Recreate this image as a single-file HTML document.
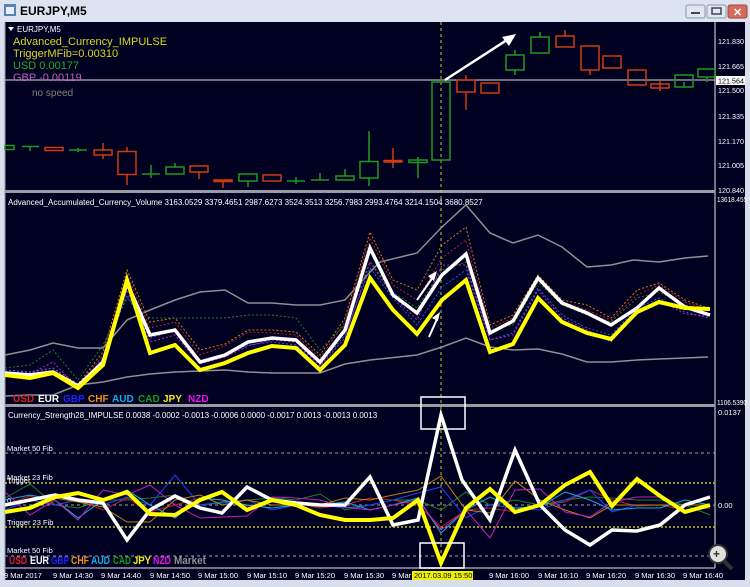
<!DOCTYPE html>
<html><head><meta charset="utf-8"><style>
html,body{margin:0;padding:0;background:#d4dde9;width:750px;height:587px;overflow:hidden}
svg{display:block}
text{font-family:"Liberation Sans",sans-serif}
</style></head><body>
<svg width="750" height="587" viewBox="0 0 750 587" xmlns="http://www.w3.org/2000/svg">
<rect x="0" y="0" width="750" height="587" fill="#d6dfeb"/>
<rect x="0" y="0" width="750" height="22" fill="#dbe4f0"/>
<rect x="4" y="4" width="12" height="12" fill="#5a80b8"/><rect x="6" y="7" width="8" height="7" fill="#e8f0fa"/>
<text x="20" y="15" font-size="12" font-weight="bold" fill="#000">EURJPY,M5</text>
<rect x="686" y="5" width="19" height="13" rx="2" fill="#dfe7f2" stroke="#8a9ab0"/><rect x="691" y="12" width="9" height="2" fill="#445"/>
<rect x="707" y="5" width="19" height="13" rx="2" fill="#dfe7f2" stroke="#8a9ab0"/><rect x="712" y="8" width="9" height="6" fill="none" stroke="#445" stroke-width="1.5"/>
<rect x="728" y="5" width="19" height="13" rx="2" fill="#d86a5a" stroke="#9a4a40"/><text x="733" y="16" font-size="11" font-weight="bold" fill="#fff">✕</text>
<rect x="5" y="22" width="740" height="558" fill="#000020"/>
<rect x="5" y="190" width="710" height="3" fill="#9a9aa4"/>
<rect x="5" y="404" width="710" height="3" fill="#9a9aa4"/>
<line x1="715" y1="22" x2="715" y2="568" stroke="#9a9aa4" stroke-width="1.5"/>
<line x1="5" y1="568" x2="715" y2="568" stroke="#9a9aa4" stroke-width="1.5"/>
<line x1="5" y1="22" x2="5" y2="580" stroke="#9a9aa4"/>
<line x1="5" y1="80" x2="715" y2="80" stroke="#b0b0b8" stroke-width="1.2"/>
<line x1="441" y1="22" x2="441" y2="568" stroke="#c8c820" stroke-dasharray="3,3"/>
<g stroke-width="1.5" fill="none">
<g stroke="#1e9a1e">
<rect x="5" y="145.5" width="9" height="4"/><line x1="22" y1="146.5" x2="39" y2="146.5"/><line x1="30" y1="146" x2="30" y2="151"/>
<line x1="69" y1="150" x2="87" y2="150"/><line x1="78" y1="148" x2="78" y2="152"/>
<line x1="142" y1="174" x2="160" y2="174"/><line x1="151" y1="165" x2="151" y2="178"/>
<rect x="166" y="167" width="18" height="7"/><line x1="175" y1="163" x2="175" y2="167"/>
<rect x="239" y="174" width="18" height="7"/><line x1="248" y1="181" x2="248" y2="187"/>
<line x1="287" y1="181" x2="305" y2="181"/><line x1="296" y1="177" x2="296" y2="184"/>
<line x1="311" y1="180" x2="329" y2="180"/><line x1="320" y1="173" x2="320" y2="180"/>
<rect x="336" y="176" width="18" height="4"/><line x1="345" y1="169" x2="345" y2="176"/>
<rect x="360" y="161.5" width="18" height="16.5"/><line x1="369" y1="131" x2="369" y2="161.5"/><line x1="369" y1="178" x2="369" y2="186"/>
<rect x="409" y="160" width="18" height="2.5"/><line x1="418" y1="157" x2="418" y2="178"/>
<rect x="432" y="82" width="18" height="78"/>
<rect x="506" y="55" width="18" height="15"/><line x1="515" y1="50" x2="515" y2="55"/><line x1="515" y1="70" x2="515" y2="75"/>
<rect x="531" y="37" width="18" height="16"/><line x1="540" y1="32" x2="540" y2="37"/>
<rect x="675" y="75" width="18" height="12"/><line x1="684" y1="87" x2="684" y2="82"/>
<rect x="698" y="69" width="17" height="8"/><line x1="707" y1="77" x2="707" y2="82"/>
</g>
<g stroke="#d03a10">
<rect x="45" y="147.5" width="18" height="3"/>
<rect x="94" y="150" width="18" height="5"/><line x1="103" y1="143" x2="103" y2="150"/><line x1="103" y1="155" x2="103" y2="159"/>
<rect x="118" y="151.5" width="18" height="23"/><line x1="127" y1="147" x2="127" y2="151.5"/><line x1="127" y1="174.5" x2="127" y2="185"/>
<rect x="190" y="166" width="18" height="6"/><line x1="199" y1="172" x2="199" y2="179"/>
<rect x="214" y="180" width="18" height="1.5"/><line x1="223" y1="181" x2="223" y2="188"/>
<rect x="263" y="175" width="18" height="6"/>
<rect x="384" y="160.5" width="18" height="1.5"/><line x1="393" y1="148" x2="393" y2="168"/>
<rect x="457" y="80" width="18" height="12"/><line x1="466" y1="75" x2="466" y2="80"/><line x1="466" y1="92" x2="466" y2="110"/>
<rect x="481" y="83" width="18" height="10"/>
<rect x="556" y="36" width="18" height="11"/><line x1="565" y1="30" x2="565" y2="36"/>
<rect x="581" y="46" width="18" height="24"/><line x1="590" y1="70" x2="590" y2="75"/>
<rect x="603" y="56" width="18" height="12"/>
<rect x="628" y="70" width="18" height="15"/>
<rect x="651" y="84" width="18" height="4"/><line x1="660" y1="80" x2="660" y2="91"/>
</g>
</g>
<line x1="445" y1="80" x2="510" y2="38" stroke="#fff" stroke-width="2.5"/>
<polygon points="516,34 502,37 509,46" fill="#fff"/>
<polygon points="8,27 14,27 11,31" fill="#fff"/>
<text x="17" y="32" font-size="8" fill="#fff">EURJPY,M5</text>
<text x="13" y="45" font-size="11" fill="#d8d820">Advanced_Currency_IMPULSE</text>
<text x="13" y="57" font-size="11" fill="#d8d820">TriggerMFib=0.00310</text>
<text x="13" y="69" font-size="11" fill="#20b020">USD 0.00177</text>
<text x="13" y="81" font-size="11" fill="#c060c0">GBP -0.00119</text>
<text x="32" y="96" font-size="10" fill="#808080">no speed</text>
<g font-size="7.5" fill="#fff">
<text x="718" y="44" textLength="26" lengthAdjust="spacingAndGlyphs">121.830</text><text x="718" y="69" textLength="26" lengthAdjust="spacingAndGlyphs">121.665</text>
<rect x="716" y="76" width="29" height="9" fill="#fff"/><text x="718" y="83.5" fill="#000" textLength="26" lengthAdjust="spacingAndGlyphs">121.564</text>
<text x="718" y="93" textLength="26" lengthAdjust="spacingAndGlyphs">121.500</text><text x="718" y="119" textLength="26" lengthAdjust="spacingAndGlyphs">121.335</text><text x="718" y="144" textLength="26" lengthAdjust="spacingAndGlyphs">121.170</text>
<text x="718" y="168" textLength="26" lengthAdjust="spacingAndGlyphs">121.005</text><text x="718" y="193" textLength="26" lengthAdjust="spacingAndGlyphs">120.840</text>
<text x="717" y="202" textLength="30" lengthAdjust="spacingAndGlyphs">13618.455</text>
<text x="717" y="405" textLength="30" lengthAdjust="spacingAndGlyphs">1106.5390</text>
<text x="718" y="415">0.0137</text><text x="718" y="508">0.00</text>
</g>
<text x="8" y="205" font-size="8" fill="#fff">Advanced_Accumulated_Currency_Volume  3163.0529 3379.4651 2987.6273 3524.3513 3256.7983 2993.4764 3214.1504 3680.8527</text>
<g fill="none" stroke-linejoin="miter">
<polyline stroke="#909090" stroke-width="1.5" points="5,355 30,350 53,343 78,348 103,348 127,320 150,310 175,300 200,292 225,290 248,303 272,303 296,305 320,305 345,300 370,272 380,262 417,253 442,227 466,205 490,233 513,243 538,235 562,247 587,267 611,265 633,260 659,262 685,258 708,256"/>
<polyline stroke="#909090" stroke-width="1.5" points="5,396 30,395 53,395 78,385 103,382 127,377 150,374 175,372 200,371 225,370 248,372 272,373 296,373 320,373 345,364 370,360 417,355 442,347 466,338 490,347 513,350 538,349 562,354 587,362 611,362 637,360 659,359 685,358 708,357"/>
<polyline stroke="#d08010" stroke-width="1" stroke-dasharray="2,2" points="5,370 30,372 53,368 78,384 103,352 127,270 150,322 175,318 200,350 225,344 248,330 272,330 296,332 320,355 345,318 370,232 393,280 417,290 442,245 466,227 490,325 513,315 538,275 562,300 587,305 611,318 637,290 659,283 685,300 708,308"/>
<polyline stroke="#c02020" stroke-width="1" stroke-dasharray="2,2" points="5,372 30,373 53,370 78,385 103,356 127,275 150,328 175,322 200,355 225,346 248,332 272,333 296,335 320,358 345,322 370,238 393,285 417,300 442,258 466,240 490,328 513,318 538,278 562,302 587,310 611,320 637,295 659,285 685,302 708,310"/>
<polyline stroke="#208020" stroke-width="1" stroke-dasharray="2,2" points="5,368 30,365 53,350 78,380 103,345 127,298 150,318 175,318 200,318 225,318 248,315 272,315 296,318 320,350 345,325 370,262 393,292 417,308 442,270 466,262 490,330 513,325 538,282 562,305 587,315 611,322 637,298 659,292 685,305 708,310"/>
<polyline stroke="#2060ff" stroke-width="1" stroke-dasharray="2,2" points="5,370 30,372 53,368 78,388 103,358 127,295 150,338 175,330 200,362 225,355 248,345 272,342 296,345 320,365 345,335 370,268 393,298 417,325 442,287 466,270 490,340 513,333 538,288 562,315 587,328 611,335 637,308 659,298 685,312 708,318"/>
<polyline stroke="#c020d0" stroke-width="1" stroke-dasharray="2,2" points="5,372 30,374 53,362 78,388 103,360 127,290 150,342 175,335 200,364 225,357 248,346 272,340 296,342 320,366 345,338 370,262 393,296 417,320 442,265 466,265 490,340 513,335 538,290 562,318 587,330 611,342 637,312 659,300 685,314 708,316"/>
<polyline stroke="#fff" stroke-width="3.5" points="5,373 30,375 53,372 78,386 103,362 127,283 150,335 175,330 200,362 225,355 248,342 272,338 296,340 320,362 345,330 370,248 393,295 417,313 442,275 466,254 490,333 513,321 538,278 562,303 587,313 611,325 637,308 659,288 685,307 710,315"/>
<polyline stroke="#ffff00" stroke-width="4" points="5,375 30,378 53,373 78,388 103,365 127,280 150,353 175,345 200,370 225,363 248,353 272,346 296,348 320,370 345,345 370,278 393,310 417,334 442,300 466,280 490,352 513,344 538,298 562,322 587,333 611,339 637,312 659,302 685,308 710,309"/>
</g>
<line x1="417" y1="300" x2="433" y2="277" stroke="#fff" stroke-width="2"/><polygon points="437,271 428,276 434,281" fill="#fff"/>
<line x1="429" y1="337" x2="437" y2="319" stroke="#fff" stroke-width="2"/><polygon points="440,312 432,318 438,321" fill="#fff"/>
<g font-size="10" font-weight="bold">
<text x="13" y="402" fill="#e02020">USD</text><text x="38" y="402" fill="#fff">EUR</text><text x="63" y="402" fill="#2020ff">GBP</text><text x="88" y="402" fill="#f09010">CHF</text><text x="112" y="402" fill="#10b0f0">AUD</text><text x="138" y="402" fill="#10a010">CAD</text><text x="163" y="402" fill="#f0f010">JPY</text><text x="188" y="402" fill="#f010f0">NZD</text>
</g>
<text x="8" y="418" font-size="8" fill="#fff">Currency_Strength28_IMPULSE  0.0038 -0.0002 -0.0013 -0.0006 0.0000 -0.0017 0.0013 -0.0013 0.0013</text>
<g stroke-width="1" fill="none">
<line x1="5" y1="453" x2="715" y2="453" stroke="#a0a0a0" stroke-dasharray="3,3"/>
<line x1="5" y1="483" x2="715" y2="483" stroke="#c8c820" stroke-width="1.5" stroke-dasharray="2,2"/>
<line x1="5" y1="505" x2="715" y2="505" stroke="#a0a0a0" stroke-dasharray="3,3"/>
<line x1="5" y1="527" x2="715" y2="527" stroke="#c8c820" stroke-width="1.5" stroke-dasharray="2,2"/>
<line x1="5" y1="556" x2="715" y2="556" stroke="#a0a0a0" stroke-dasharray="3,3"/>
</g>
<g font-size="7.5" fill="#fff">
<text x="7" y="451">Market 50 Fib</text><text x="7" y="480">Market 23 Fib</text><text x="7" y="483">Trigger</text>
<text x="7" y="503">0</text><text x="7" y="525">Trigger 23 Fib</text><text x="7" y="553">Market 50 Fib</text>
</g>
<g fill="none" stroke-width="1">
<polyline stroke="#c02020" points="5,505 30,496 55,505 78,500 103,510 127,498 150,512 175,505 200,498 222,500 247,506 272,502 296,503 320,508 345,505 370,498 393,500 418,505 441,527 466,510 490,508 515,512 540,505 565,502 590,490 612,500 637,506 660,505 685,510 710,505"/>
<polyline stroke="#208020" points="5,498 30,484 55,505 78,508 103,500 127,500 150,498 175,495 200,505 222,502 247,500 272,498 296,500 320,494 345,510 370,505 393,500 418,500 441,510 466,492 490,505 515,500 540,505 565,500 590,497 612,498 637,500 660,500 685,505 710,515"/>
<polyline stroke="#2040ff" points="5,510 30,500 55,505 78,500 103,505 127,497 150,505 175,475 200,505 222,503 247,500 272,510 296,505 320,505 345,508 370,505 393,500 418,493 441,487 466,518 490,505 515,508 540,510 565,500 590,490 612,512 637,505 660,505 685,505 710,505"/>
<polyline stroke="#c08010" points="5,505 30,500 55,498 78,502 103,507 127,522 150,522 175,500 200,495 222,505 247,500 272,505 296,505 320,505 345,498 370,500 393,495 418,490 441,476 466,510 490,513 515,481 540,500 565,510 590,518 612,505 637,505 660,505 685,505 710,505"/>
<polyline stroke="#10b0e0" points="5,500 30,495 55,500 78,518 103,500 127,490 150,505 175,518 200,498 222,500 247,505 272,508 296,505 320,505 345,502 370,510 393,505 418,498 441,533 466,510 490,497 515,508 540,507 565,492 590,500 612,510 637,508 660,508 685,500 710,505"/>
<polyline stroke="#c020c0" points="5,492 30,515 55,500 78,520 103,490 127,495 150,485 175,505 200,518 222,517 247,516 272,497 296,498 320,500 345,507 370,510 393,505 418,500 441,530 466,510 490,538 515,490 540,489 565,512 590,517 612,502 637,497 660,497 685,510 710,508"/>
<polyline stroke="#fff" stroke-width="3.5" points="5,505 30,500 55,495 78,500 103,503 127,540 150,510 175,496 200,508 222,513 247,487 272,500 296,503 320,505 345,505 370,477 393,525 418,520 441,415 462,480 490,520 515,450 540,505 565,530 590,545 612,530 637,531 660,525 685,505 710,497"/>
<polyline stroke="#ffff00" stroke-width="4" points="5,512 30,508 55,497 78,493 103,500 127,492 150,514 175,515 200,500 222,492 247,510 272,500 296,505 320,515 345,520 370,520 393,518 418,500 441,563 466,508 490,489 515,512 540,505 565,485 590,472 612,506 637,479 660,496 685,512 710,505"/>
</g>
<rect x="421" y="397" width="44" height="32" fill="none" stroke="#fff" stroke-width="1.5"/>
<rect x="420" y="543" width="44" height="25" fill="none" stroke="#fff" stroke-width="1.5"/>
<g font-size="11" font-weight="bold">
<text x="9" y="564" fill="#e02020" textLength="18" lengthAdjust="spacingAndGlyphs">USD</text>
<text x="30" y="564" fill="#fff" textLength="19" lengthAdjust="spacingAndGlyphs">EUR</text>
<text x="51" y="564" fill="#2020ff" textLength="18" lengthAdjust="spacingAndGlyphs">GBP</text>
<text x="71" y="564" fill="#f09010" textLength="18" lengthAdjust="spacingAndGlyphs">CHF</text>
<text x="91" y="564" fill="#10b0f0" textLength="19" lengthAdjust="spacingAndGlyphs">AUD</text>
<text x="113" y="564" fill="#10a010" textLength="18" lengthAdjust="spacingAndGlyphs">CAD</text>
<text x="133" y="564" fill="#f0f010" textLength="18" lengthAdjust="spacingAndGlyphs">JPY</text>
<text x="153" y="564" fill="#f010f0" textLength="18" lengthAdjust="spacingAndGlyphs">NZD</text>
<text x="174" y="564" fill="#909090" textLength="32" lengthAdjust="spacingAndGlyphs">Market</text>
</g>
<circle cx="718" cy="554" r="9" fill="#e0e0e0" stroke="#333" stroke-width="2"/>
<line x1="724" y1="561" x2="732" y2="569" stroke="#333" stroke-width="4"/>
<text x="713" y="558" font-size="12" font-weight="bold" fill="#333">+</text>
<g font-size="7.5" fill="#fff">
<text x="4" y="578">9 Mar 2017</text><text x="53" y="578">9 Mar 14:30</text><text x="101" y="578">9 Mar 14:40</text><text x="150" y="578">9 Mar 14:50</text><text x="198" y="578">9 Mar 15:00</text><text x="247" y="578">9 Mar 15:10</text><text x="295" y="578">9 Mar 15:20</text><text x="344" y="578">9 Mar 15:30</text><text x="392" y="578">9 Mar</text><text x="489" y="578">9 Mar 16:00</text><text x="538" y="578">9 Mar 16:10</text><text x="586" y="578">9 Mar 16:20</text><text x="635" y="578">9 Mar 16:30</text><text x="683" y="578">9 Mar 16:40</text>
<rect x="412" y="571" width="61" height="9" fill="#f0f000"/><text x="414" y="578" fill="#000">2017.03.09 15:50</text>
</g>
</svg>
</body></html>
